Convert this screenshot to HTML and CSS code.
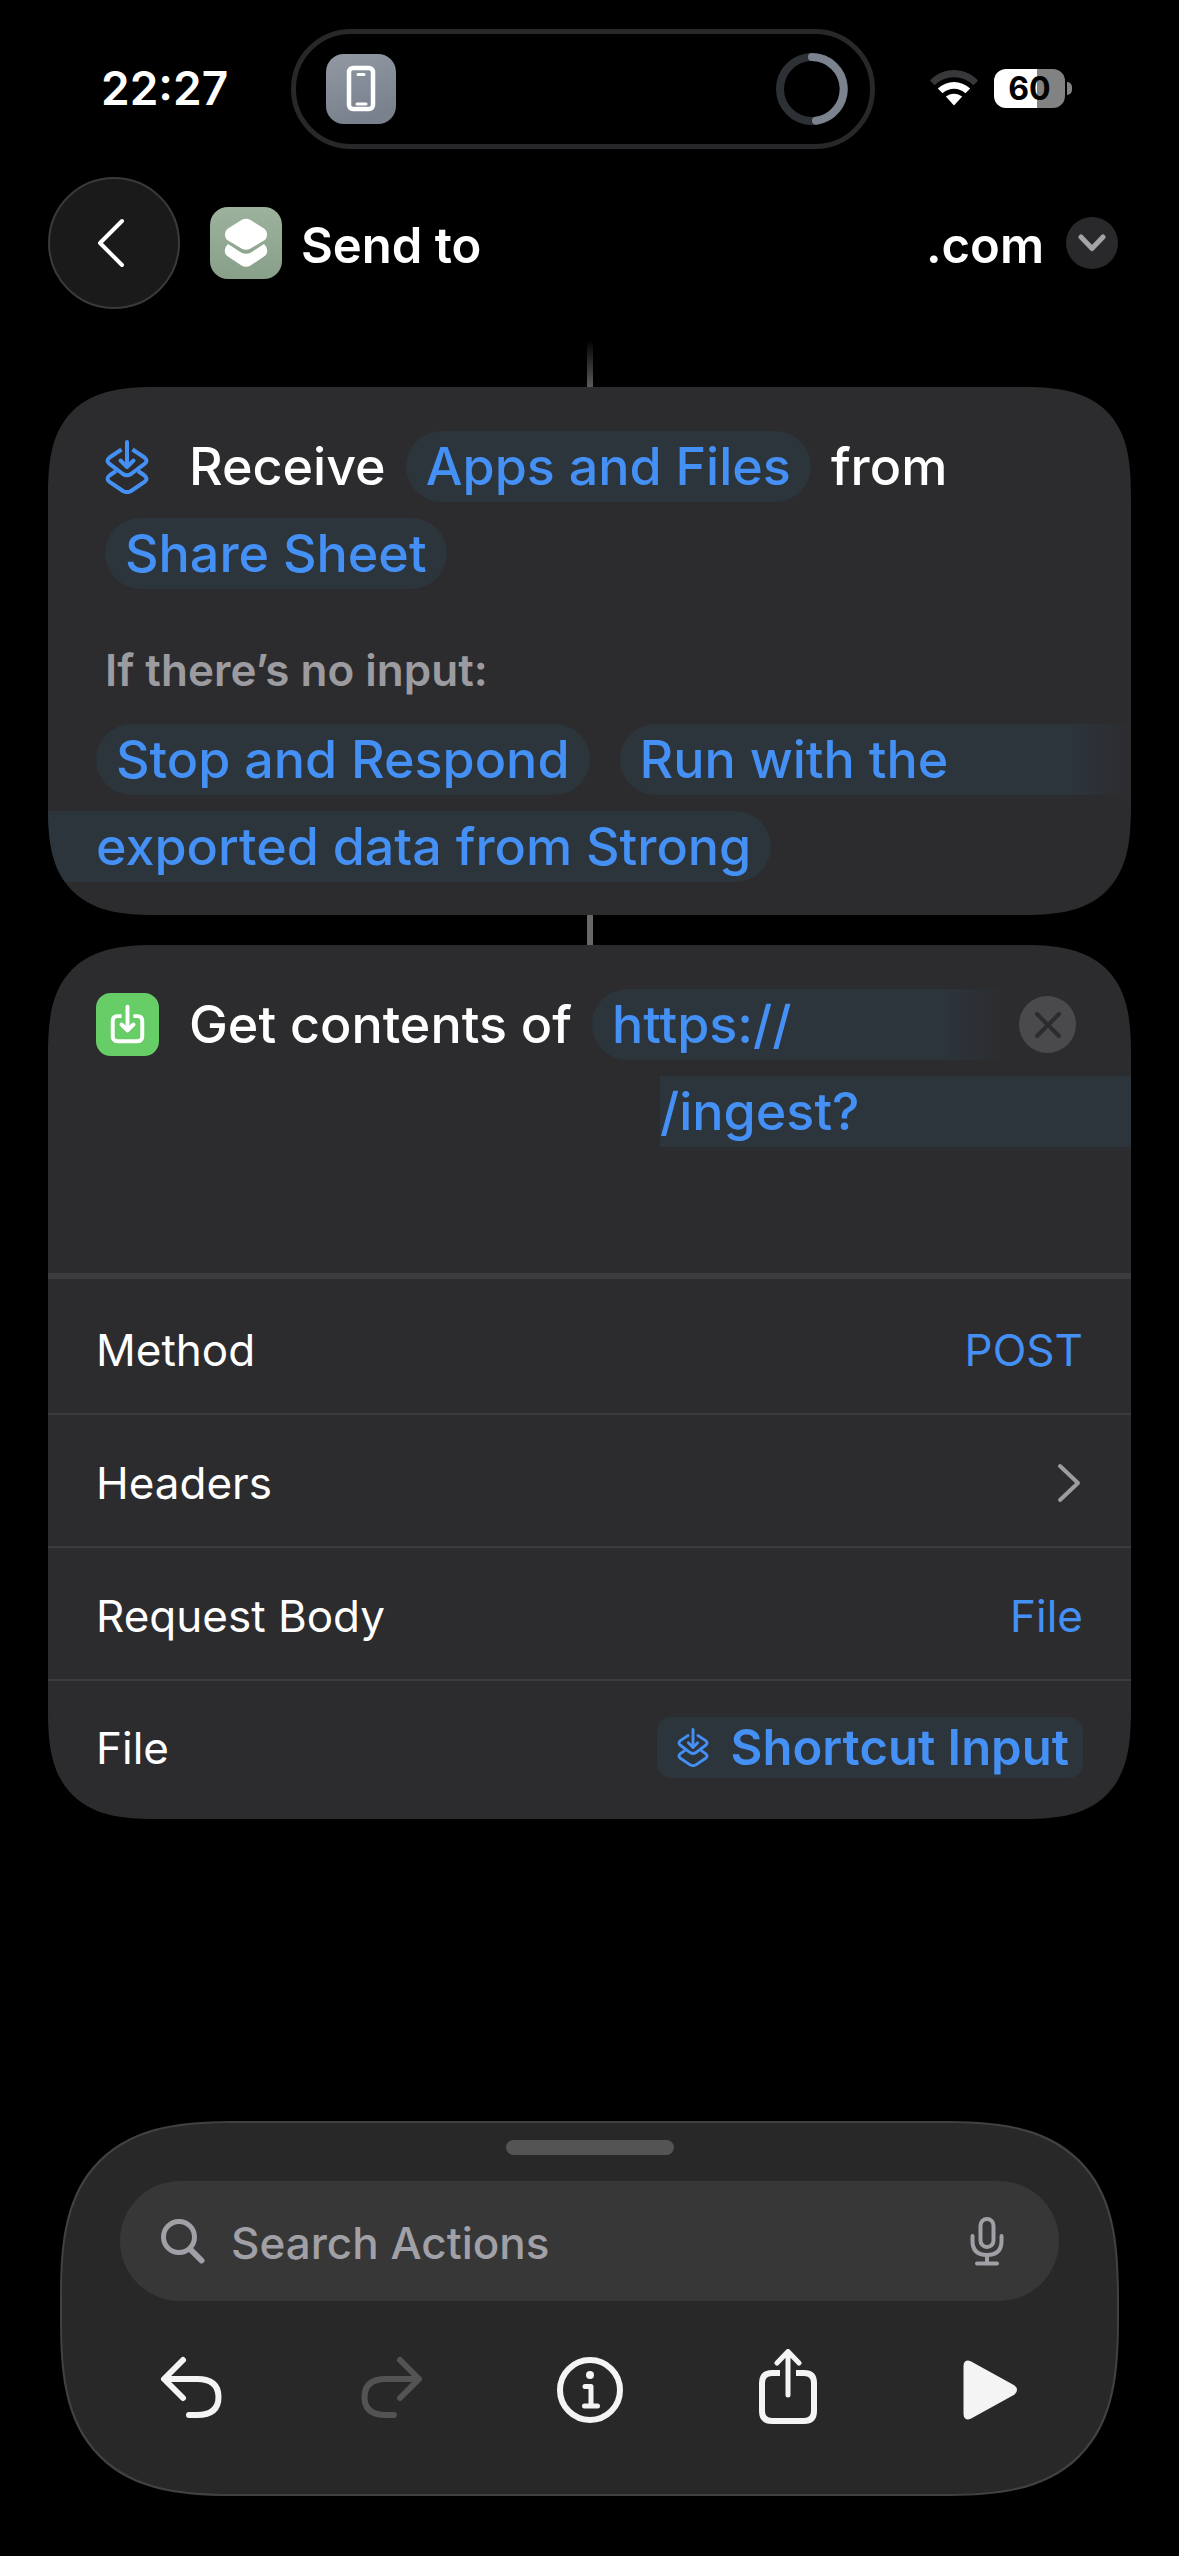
FILE: index.html
```html
<!DOCTYPE html>
<html lang="en">
<head>
<meta charset="utf-8">
<meta name="viewport" content="width=device-width, initial-scale=1">
<title>Send to .com</title>
<link rel="stylesheet" href="styles.css">
</head>
<body>
<svg class="defs" aria-hidden="true">
  <symbol id="input-icon" viewBox="0 0 44 54">
    <g fill="none" stroke="currentColor" stroke-width="4" stroke-linecap="round" stroke-linejoin="round">
      <path d="M22 2v24M15.500 20.500 22 27l6.500-6.500"/>
      <path stroke-linecap="butt" d="M16.500 9.500 4.500 17.500q-4 3.200 0 6.400L18 34q4 2.600 8 0l13.500-10.100q4-3.200 0-6.400L27.500 9.500"/>
      <path stroke-linecap="butt" d="M11 31 4.500 35.500q-4 3.200 0 6.400L18 51q4 2.200 8 0l13.500-9.100q4-3.200 0-6.400L33 31"/>
    </g>
  </symbol>
</svg>

<header class="status-bar">
  <time class="clock">22:27</time>
  <div class="island">
    <svg class="island-app" viewBox="0 0 70 70" aria-hidden="true">
      <defs><linearGradient id="slate" x1="0" y1="0" x2="0.300" y2="1"><stop offset="0" stop-color="#9299a3"/><stop offset="1" stop-color="#79818d"/></linearGradient></defs>
      <rect width="70" height="70" rx="18" fill="url(#slate)"/>
      <rect x="23" y="14" width="24" height="41" rx="4" fill="none" stroke="#fff" stroke-width="4.500"/>
      <path d="M32 20.500h6M31 50h9" stroke="#fff" stroke-width="3" stroke-linecap="round"/>
    </svg>
    <svg class="island-ring" viewBox="0 0 72 72" aria-hidden="true">
      <circle cx="36" cy="36" r="32" fill="none" stroke="#2d3035" stroke-width="8"/>
      <path d="M36 4a32 32 0 0 1 4 63.700" fill="none" stroke="#7b838f" stroke-width="8" stroke-linecap="round"/>
    </svg>
  </div>
  <div class="status-icons">
    <svg class="wifi" viewBox="0 0 48 36" aria-label="Wi-Fi">
      <path d="M0 10.500C13-3.500 35-3.500 48 10.500L43.500 15.200C33 4.500 15 4.500 4.500 15.200Z" fill="#38383a"/>
      <path d="M7.800 18.500C17 9.800 31 9.800 40.200 18.500L35.500 23.200C29 17.200 19 17.200 12.500 23.200Z" fill="#fff"/>
      <path d="M15.800 26.600C20.500 22.700 27.500 22.700 32.200 26.600L24 35.500Z" fill="#fff"/>
    </svg>
    <div class="battery"><span class="battery-level">60</span><span class="battery-tip"></span></div>
  </div>
</header>

<nav class="title-bar">
  <button class="back" type="button" aria-label="Back">
    <svg viewBox="0 0 28 50" aria-hidden="true"><path d="M25 3 3 25l22 22" fill="none" stroke="#fff" stroke-width="4" stroke-linecap="round" stroke-linejoin="round"/></svg>
  </button>
  <svg class="shortcut-icon" viewBox="0 0 72 72" aria-hidden="true">
    <defs><linearGradient id="sage" x1="0" y1="0" x2="0" y2="1"><stop offset="0" stop-color="#9cb29c"/><stop offset="1" stop-color="#889f89"/></linearGradient></defs>
    <rect width="72" height="72" rx="18" fill="url(#sage)"/>
    <path d="M18 37Q14 40.500 15 45.500q.5 2.500 3 4L31.500 58.500Q36 61 40.500 58.500L54 49.500q2.500-1.500 3-4Q58 40.500 54 37L41 45.500q-5 2.500-10 0Z" fill="#fff"/>
    <path d="M31.500 13Q36 10.500 40.500 13L54 21.500q3 2 3 6t-3 6L40.500 41.500q-4.500 2.500-9 0L18 33.500q-3-2-3-6t3-6Z" fill="#fff"/>
  </svg>
  <h1 class="title"><span>Send to</span><span>.com</span></h1>
  <button class="title-menu" type="button" aria-label="Shortcut options">
    <svg viewBox="0 0 28 18" aria-hidden="true"><path d="M3 3 14 14.500 25 3" fill="none" stroke="#a3a3a8" stroke-width="5" stroke-linecap="round" stroke-linejoin="round"/></svg>
  </button>
</nav>

<main class="actions">
  <div class="connector connector-start"></div>

  <section class="card card-input">
    <div class="line line-icon">
      <svg class="input-glyph"><use href="#input-icon"/></svg>
      <span class="phrase">Receive</span>
      <button class="token" type="button">Apps and Files</button>
      <span class="phrase">from</span>
    </div>
    <div class="line line-icon"><button class="token" type="button">Share Sheet</button></div>
    <p class="hint">If there’s no input:</p>
    <div class="line line-run">
      <button class="token" type="button">Stop and Respond</button>
      <button class="token token-start" type="button">Run with the</button>
    </div>
    <div class="line"><button class="token token-end" type="button">exported data from Strong</button></div>
  </section>

  <div class="connector"></div>

  <section class="card card-request">
    <div class="line line-request">
      <svg class="download-icon" viewBox="0 0 64 64" aria-hidden="true">
        <rect width="64" height="64" rx="15" fill="#67ce67"/>
        <g fill="none" stroke="#fff" stroke-width="4" stroke-linecap="round" stroke-linejoin="round">
          <path stroke-linecap="butt" d="M26 23.500h-4q-5 0-5 5V44q0 5 5 5h20q5 0 5-5V28.500q0-5-5-5h-4"/>
          <path d="M32 14v23M26 32l6 6 6-6"/>
        </g>
      </svg>
      <span class="phrase">Get contents of</span>
      <button class="token token-start" type="button">https://</button>
      <button class="clear" type="button" aria-label="Remove action">
        <svg viewBox="0 0 26 26" aria-hidden="true"><path d="M2 2l22 22M24 2 2 24" fill="none" stroke="#2c2c2e" stroke-width="4" stroke-linecap="round"/></svg>
      </button>
    </div>
    <div class="line line-path"><button class="token token-middle" type="button">/ingest?</button></div>
    <div class="fields">
      <div class="field">
        <label for="method">Method</label>
        <select id="method"><option>POST</option><option>GET</option><option>PUT</option></select>
      </div>
      <div class="field">
        <span id="headers">Headers</span>
        <button class="disclosure" type="button" aria-labelledby="headers">
          <svg viewBox="0 0 24 40" aria-hidden="true"><path d="M3 3l18 17L3 37" fill="none" stroke="#9c9ca1" stroke-width="4" stroke-linecap="round" stroke-linejoin="round"/></svg>
        </button>
      </div>
      <div class="field">
        <label for="body">Request Body</label>
        <select id="body"><option>File</option><option>JSON</option><option>Form</option></select>
      </div>
      <div class="field">
        <span>File</span>
        <button class="variable" type="button"><svg><use href="#input-icon"/></svg>Shortcut Input</button>
      </div>
    </div>
  </section>
</main>

<footer class="panel">
  <div class="grabber"></div>
  <div class="search">
    <svg class="search-glyph" viewBox="0 0 44 46" aria-hidden="true"><circle cx="18" cy="19" r="15.500" fill="none" stroke="#a0a0a6" stroke-width="5"/><path d="M29 31l11.500 11.500" stroke="#a0a0a6" stroke-width="6" stroke-linecap="round"/></svg>
    <input type="search" placeholder="Search Actions" aria-label="Search Actions">
    <button class="mic" type="button" aria-label="Dictate">
      <svg viewBox="0 0 34 50" aria-hidden="true"><g fill="none" stroke="#a0a0a6" stroke-width="4" stroke-linecap="round"><rect x="10.500" y="3" width="13" height="28" rx="6.500"/><path d="M2.500 20v5q0 14 14.500 14t14.500-14v-5M17 39v8M7 47.500h20"/></g></svg>
    </button>
  </div>
  <div class="tools">
    <button type="button" aria-label="Undo">
      <svg viewBox="0 0 76 76" aria-hidden="true"><path d="M29 11 10 30l19 19M12 30h31q21.500 0 21.500 18T43 66H35" fill="none" stroke="#f4f4f4" stroke-width="6" stroke-linecap="round" stroke-linejoin="round"/></svg>
    </button>
    <button type="button" aria-label="Redo" disabled>
      <svg viewBox="0 0 76 76" aria-hidden="true"><path d="M47 11 66 30 47 49M64 30H33q-21.500 0-21.500 18T33 66h8" fill="none" stroke="#535353" stroke-width="6" stroke-linecap="round" stroke-linejoin="round"/></svg>
    </button>
    <button type="button" aria-label="Info">
      <svg viewBox="0 0 76 76" aria-hidden="true"><circle cx="38" cy="41" r="30" fill="none" stroke="#f4f4f4" stroke-width="6"/><circle cx="38" cy="26" r="4" fill="#f4f4f4"/><path d="M33 37.500h6V56M32.500 57h13" fill="none" stroke="#f4f4f4" stroke-width="5" stroke-linecap="round" stroke-linejoin="round"/></svg>
    </button>
    <button type="button" aria-label="Share">
      <svg viewBox="0 0 76 76" aria-hidden="true"><g fill="none" stroke="#f4f4f4" stroke-width="6"><path d="M30 24h-8q-10 0-10 10v28q0 10 10 10h32q10 0 10-10V34q0-10-10-10h-8"/><path stroke-width="5" stroke-linecap="round" stroke-linejoin="round" d="M38 46V3M27 14 38 2.500 49 14"/></g></svg>
    </button>
    <button type="button" aria-label="Run">
      <svg viewBox="0 0 76 76" aria-hidden="true"><path d="M17 17v48q0 4 3.500 2.500L64 43.500q3-2.500 0-5L20.500 14.500Q17 13 17 17Z" fill="#f4f4f4" stroke="#f4f4f4" stroke-width="5" stroke-linejoin="round"/></svg>
    </button>
  </div>
</footer>
</body>
</html>
```

FILE: styles.css
```css
:root {
  --card: #2c2c2e;
  --token: #2c343c;
  --blue: #4590f5;
  --muted: #9b9ba0;
  --line: #3c3c40;
}

* { box-sizing: border-box; }

body {
  margin: 0;
  min-height: 100vh;
  display: flex;
  flex-direction: column;
  background: #000;
  color: #fff;
  font-family: Inter, "Liberation Sans", sans-serif;
  font-size: 44px;
  line-height: 52px;
}

button, select, input { font: inherit; color: inherit; }
button {
  border: 0;
  padding: 0;
  background: none;
  white-space: nowrap;
}
svg { display: block; flex: none; }
.defs { width: 0; height: 0; position: absolute; }

/* Status bar */
.status-bar {
  display: flex;
  align-items: center;
  justify-content: space-between;
  padding: 29px 107px 0 101px;
}
.clock { margin-right: 8px; padding-bottom: 2px; font-size: 46px; font-weight: 600; }
.island {
  width: 584px;
  height: 120px;
  padding: 0 22px 0 30px;
  display: flex;
  align-items: center;
  justify-content: space-between;
  border: 5px solid #28282a;
  border-radius: 60px;
}
.island-app { width: 70px; height: 70px; }
.island-ring { width: 72px; height: 72px; }
.status-icons { display: flex; align-items: center; gap: 16px; padding-bottom: 2px; }
.wifi { width: 48px; height: 36px; }
.battery { display: flex; align-items: center; gap: 2px; }
.battery-level {
  width: 71px;
  height: 39px;
  border-radius: 12px;
  background: linear-gradient(90deg, #fff 60%, #828282 60%);
  color: #000;
  font-size: 32px;
  line-height: 39px;
  font-weight: 700;
  text-align: center;
}
.battery-tip {
  width: 5px;
  height: 13px;
  border-radius: 0 6px 6px 0;
  background: #828282;
}

/* Title bar */
.title-bar {
  display: flex;
  align-items: center;
  padding: 28px 61px 0 48px;
}
.back {
  width: 132px;
  height: 132px;
  padding-right: 6px;
  display: grid;
  place-items: center;
  border: 2px solid #3a3a3a;
  border-radius: 50%;
  background: #1a1a1a;
}
.back svg { width: 28px; height: 50px; }
.shortcut-icon { width: 72px; height: 72px; margin: 0 19px 0 30px; }
.title {
  flex: 1;
  display: flex;
  justify-content: space-between;
  margin: 0;
  padding-top: 6px;
  font-size: 49px;
  line-height: 60px;
  font-weight: 600;
}
.title-menu {
  width: 52px;
  height: 52px;
  margin-left: 22px;
  display: grid;
  place-items: center;
  border-radius: 50%;
  background: #29292c;
}
.title-menu svg { width: 28px; height: 18px; }

/* Action list */
.actions { padding: 31px 48px 60px; }
.connector { width: 6px; height: 30px; margin: 0 auto; background: #68686a; }
.connector-start { height: 47px; background: linear-gradient(#000, #5a5a5c); }

.card {
  overflow: hidden;
  border-radius: 84px;
  background: var(--card);
}
.card-input { padding: 44px 0 33px; }
.card-request { padding-top: 44px; }

.line {
  display: flex;
  align-items: center;
  height: 71px;
  margin-bottom: 16px;
  font-size: 52px;
  font-weight: 500;
  white-space: nowrap;
}
.line:last-child { margin-bottom: 0; }
.line-icon { padding-left: 57px; }
.line-run { padding-left: 48px; gap: 30px; }
.line-request { padding: 0 55px 0 48px; }
.line-path { justify-content: flex-end; margin-bottom: 126px; }

.phrase { margin: 0 20px; }
.input-glyph { width: 44px; height: 54px; margin-right: 20px; color: var(--blue); }
.download-icon { width: 63px; height: 63px; margin-right: 10px; }

.token {
  height: 71px;
  padding: 0 20px;
  border-radius: 36px;
  background: var(--token);
  color: var(--blue);
  text-align: left;
}
.token-start {
  flex: 1;
  border-radius: 36px 0 0 36px;
  background: linear-gradient(90deg, var(--token) calc(100% - 60px), var(--card));
}
.token-middle { width: 471px; padding: 0; border-radius: 0; }
.token-end { padding-left: 48px; border-radius: 0 36px 36px 0; }

.hint {
  margin: 55px 57px 28px;
  color: var(--muted);
  font-weight: 600;
}

.clear {
  width: 57px;
  height: 57px;
  margin-left: 14px;
  display: grid;
  place-items: center;
  border-radius: 50%;
  background: #4a4a4d;
}
.clear svg { width: 26px; height: 26px; }

/* Request fields */
.fields { padding: 3px 0 5px; border-top: 6px solid var(--line); }
.field {
  display: flex;
  align-items: center;
  justify-content: space-between;
  height: 133px;
  padding: 4px 48px 0;
  border-bottom: 2px solid var(--line);
}
.field:last-child { padding-top: 0; border-bottom: 0; }
.field select {
  width: 300px;
  border: 0;
  padding: 0;
  appearance: none;
  background: none;
  color: var(--blue);
  text-align-last: right;
}
.disclosure { padding-right: 2px; }
.disclosure svg { width: 24px; height: 40px; }
.variable {
  display: flex;
  align-items: center;
  gap: 22px;
  height: 61px;
  padding: 0 14px 0 20px;
  border-radius: 14px;
  background: var(--token);
  color: var(--blue);
  font-size: 49px;
  font-weight: 600;
}
.variable svg { width: 32px; height: 39px; }

/* Bottom panel */
.panel {
  margin: auto 60px 60px;
  padding: 17px 58px 69px;
  border: 2px solid #414141;
  border-radius: 140px;
  background: #282828;
}
.grabber {
  width: 168px;
  height: 15px;
  margin: 0 auto 26px;
  border-radius: 8px;
  background: #545454;
}
.search {
  display: flex;
  align-items: center;
  height: 120px;
  padding: 0 55px 0 41px;
  border-radius: 60px;
  background: #373737;
}
.search-glyph { width: 44px; height: 46px; }
.search input {
  flex: 1;
  min-width: 0;
  padding: 4px 0 0;
  margin: 0 26px;
  border: 0;
  background: none;
  appearance: none;
  font-weight: 500;
}
.search input::placeholder { color: #a0a0a6; opacity: 1; }
.mic svg { width: 34px; height: 50px; }
.tools {
  display: flex;
  justify-content: space-between;
  padding: 48px 34px 0;
}
.tools svg { width: 76px; height: 76px; }

/* Continuous corners where the browser can draw them */
@supports (corner-shape: superellipse(1.5)) {
  .card { border-radius: 112px; corner-shape: superellipse(1.5); }
  .panel { border-radius: 180px; corner-shape: superellipse(1.5); }
}
```
